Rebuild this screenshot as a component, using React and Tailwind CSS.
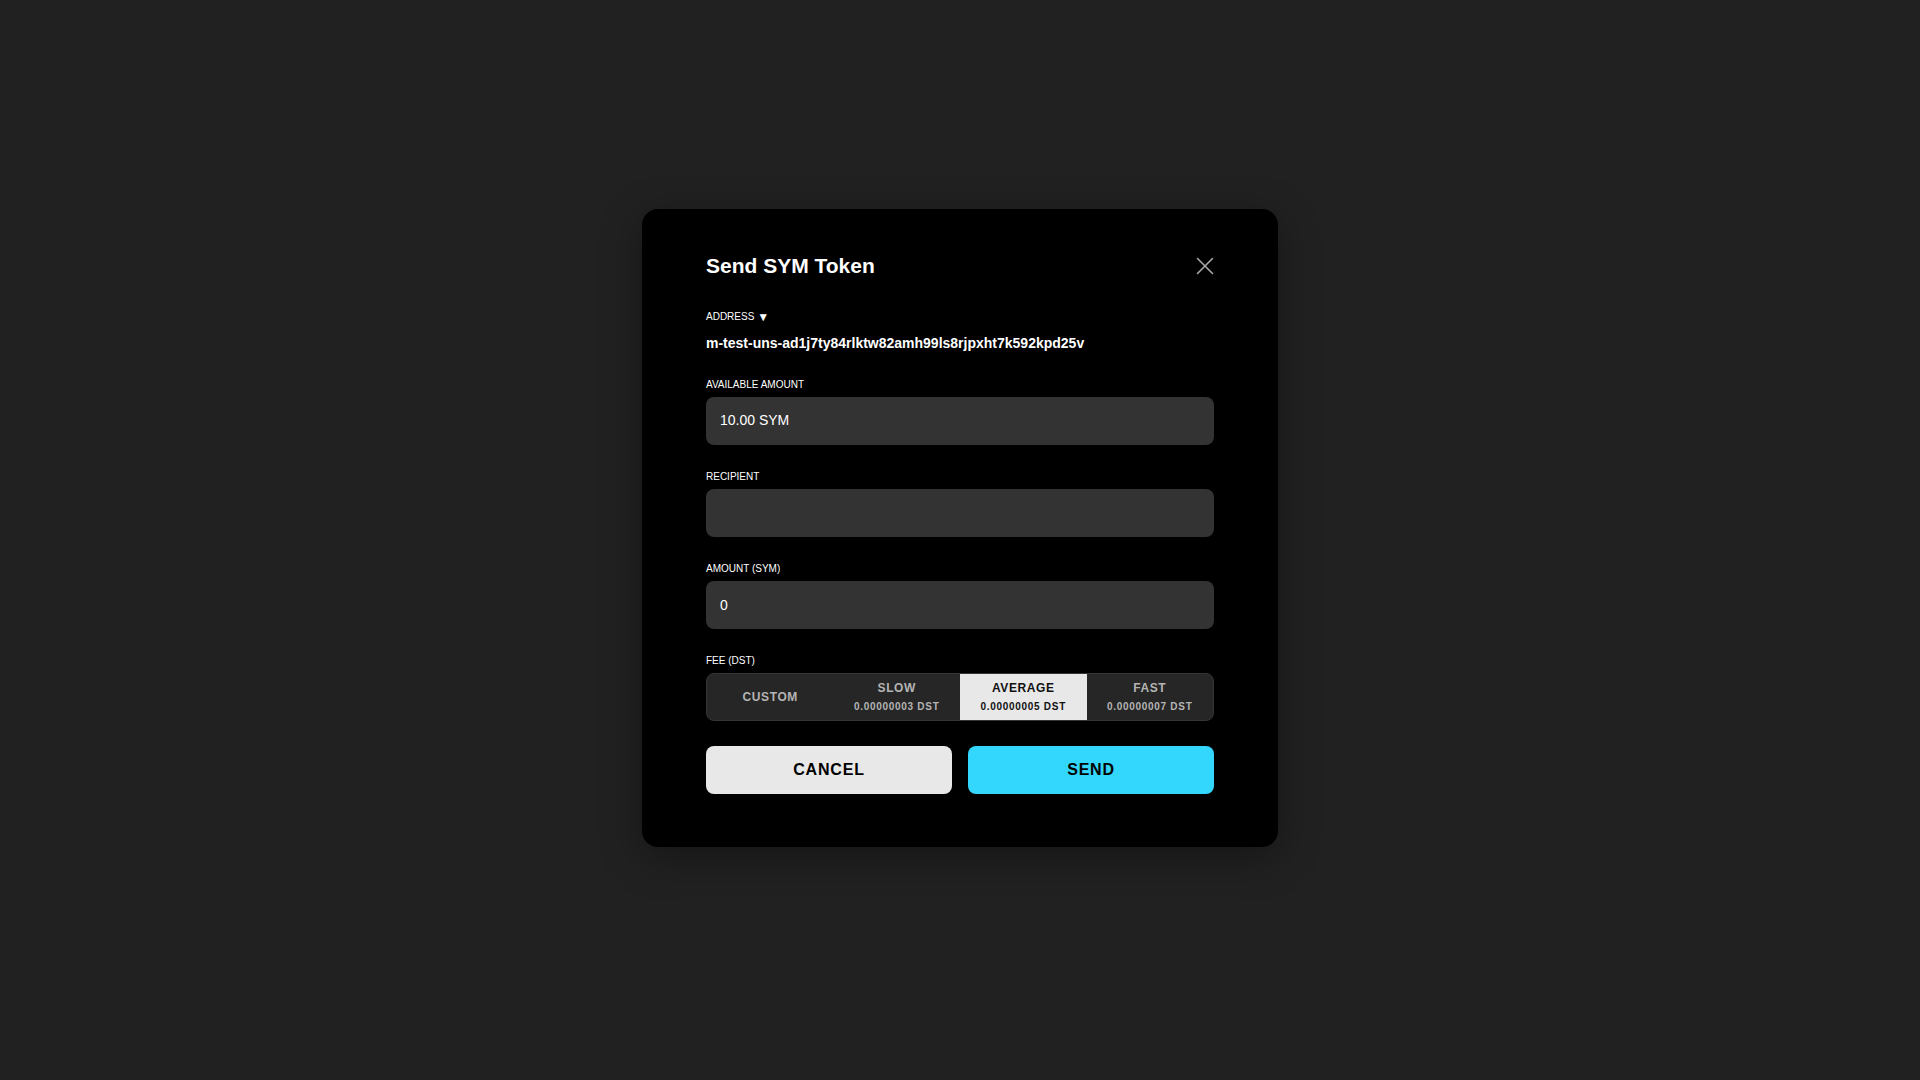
import { useState } from 'react';

const fees = [
    { id: 'custom', label: 'CUSTOM' },
    { id: 'slow', label: 'SLOW', value: '0.00000003 DST' },
    { id: 'average', label: 'AVERAGE', value: '0.00000005 DST' },
    { id: 'fast', label: 'FAST', value: '0.00000007 DST' },
];

function Label({ children }) {
    return <div className="text-[10px] leading-[12px] font-medium text-white mb-[6px]">{children}</div>;
}

export default function App() {
    const [fee, setFee] = useState('average');
    const [recipient, setRecipient] = useState('');
    const [amount, setAmount] = useState('0');

    return (
        <div
            className="min-h-screen w-full bg-[#212121] flex items-center justify-center pb-[25px]"
            style={{ fontFamily: '"Liberation Sans", Arial, sans-serif' }}
        >
            <div className="w-[636px] bg-black rounded-2xl px-16 pt-[43px] pb-[53px] shadow-[0_10px_40px_rgba(0,0,0,0.35)]">
                <div className="flex items-center justify-between h-[28px]">
                    <h1 className="text-[21px] leading-[28px] font-bold text-white">Send SYM Token</h1>
                    <button className="w-[18px] h-[18px] text-[#a8a8a8]">
                        <svg viewBox="0 0 18 18" width="18" height="18" fill="none" stroke="currentColor" strokeWidth="1.6" strokeLinecap="round">
                            <path d="M1.5 1.5L16.5 16.5M16.5 1.5L1.5 16.5" />
                        </svg>
                    </button>
                </div>

                <div className="mt-[31px]">
                    <div className="text-[10px] leading-[12px] font-medium text-white flex items-center gap-[3px]">
                        ADDRESS <span className="text-[12px] leading-[12px]">▼</span>
                    </div>
                    <div className="mt-[10px] text-[14px] leading-[20px] font-bold text-white">
                        m-test-uns-ad1j7ty84rlktw82amh99ls8rjpxht7k592kpd25v
                    </div>
                </div>

                <div className="mt-[26px]">
                    <Label>AVAILABLE AMOUNT</Label>
                    <div className="h-12 rounded-lg bg-[#333333] px-[14px] flex items-center text-[14px] text-white">10.00 SYM</div>
                </div>

                <div className="mt-[26px]">
                    <Label>RECIPIENT</Label>
                    <input
                        value={recipient}
                        onChange={(e) => setRecipient(e.target.value)}
                        className="w-full h-12 rounded-lg bg-[#333333] px-[14px] text-[14px] text-white outline-none"
                    />
                </div>

                <div className="mt-[26px]">
                    <Label>AMOUNT (SYM)</Label>
                    <input
                        value={amount}
                        onChange={(e) => setAmount(e.target.value)}
                        className="w-full h-12 rounded-lg bg-[#333333] px-[14px] text-[14px] text-white outline-none"
                    />
                </div>

                <div className="mt-[26px]">
                    <Label>FEE (DST)</Label>
                    <div className="h-12 rounded-lg bg-[#262626] border border-[#353535] grid grid-cols-4 overflow-hidden">
                        {fees.map((f) => {
                            const active = fee === f.id;
                            return (
                                <button
                                    key={f.id}
                                    onClick={() => setFee(f.id)}
                                    className={
                                        'flex flex-col items-center justify-center font-bold ' +
                                        (active ? 'bg-[#e8e8e8] text-[#111111]' : 'text-[#b4b4b4]')
                                    }
                                >
                                    <span className="text-[12px] leading-[14px] tracking-[0.05em]">{f.label}</span>
                                    {f.value && (
                                        <span className="text-[10px] leading-[12px] tracking-[0.07em] mt-[6px]">{f.value}</span>
                                    )}
                                </button>
                            );
                        })}
                    </div>
                </div>

                <div className="mt-[25px] grid grid-cols-2 gap-4">
                    <button className="h-12 rounded-lg bg-[#e8e8e8] text-black text-[16px] font-bold tracking-[0.05em]">CANCEL</button>
                    <button className="h-12 rounded-lg bg-[#33d7fd] text-black text-[16px] font-bold tracking-[0.05em]">SEND</button>
                </div>
            </div>
        </div>
    );
}
